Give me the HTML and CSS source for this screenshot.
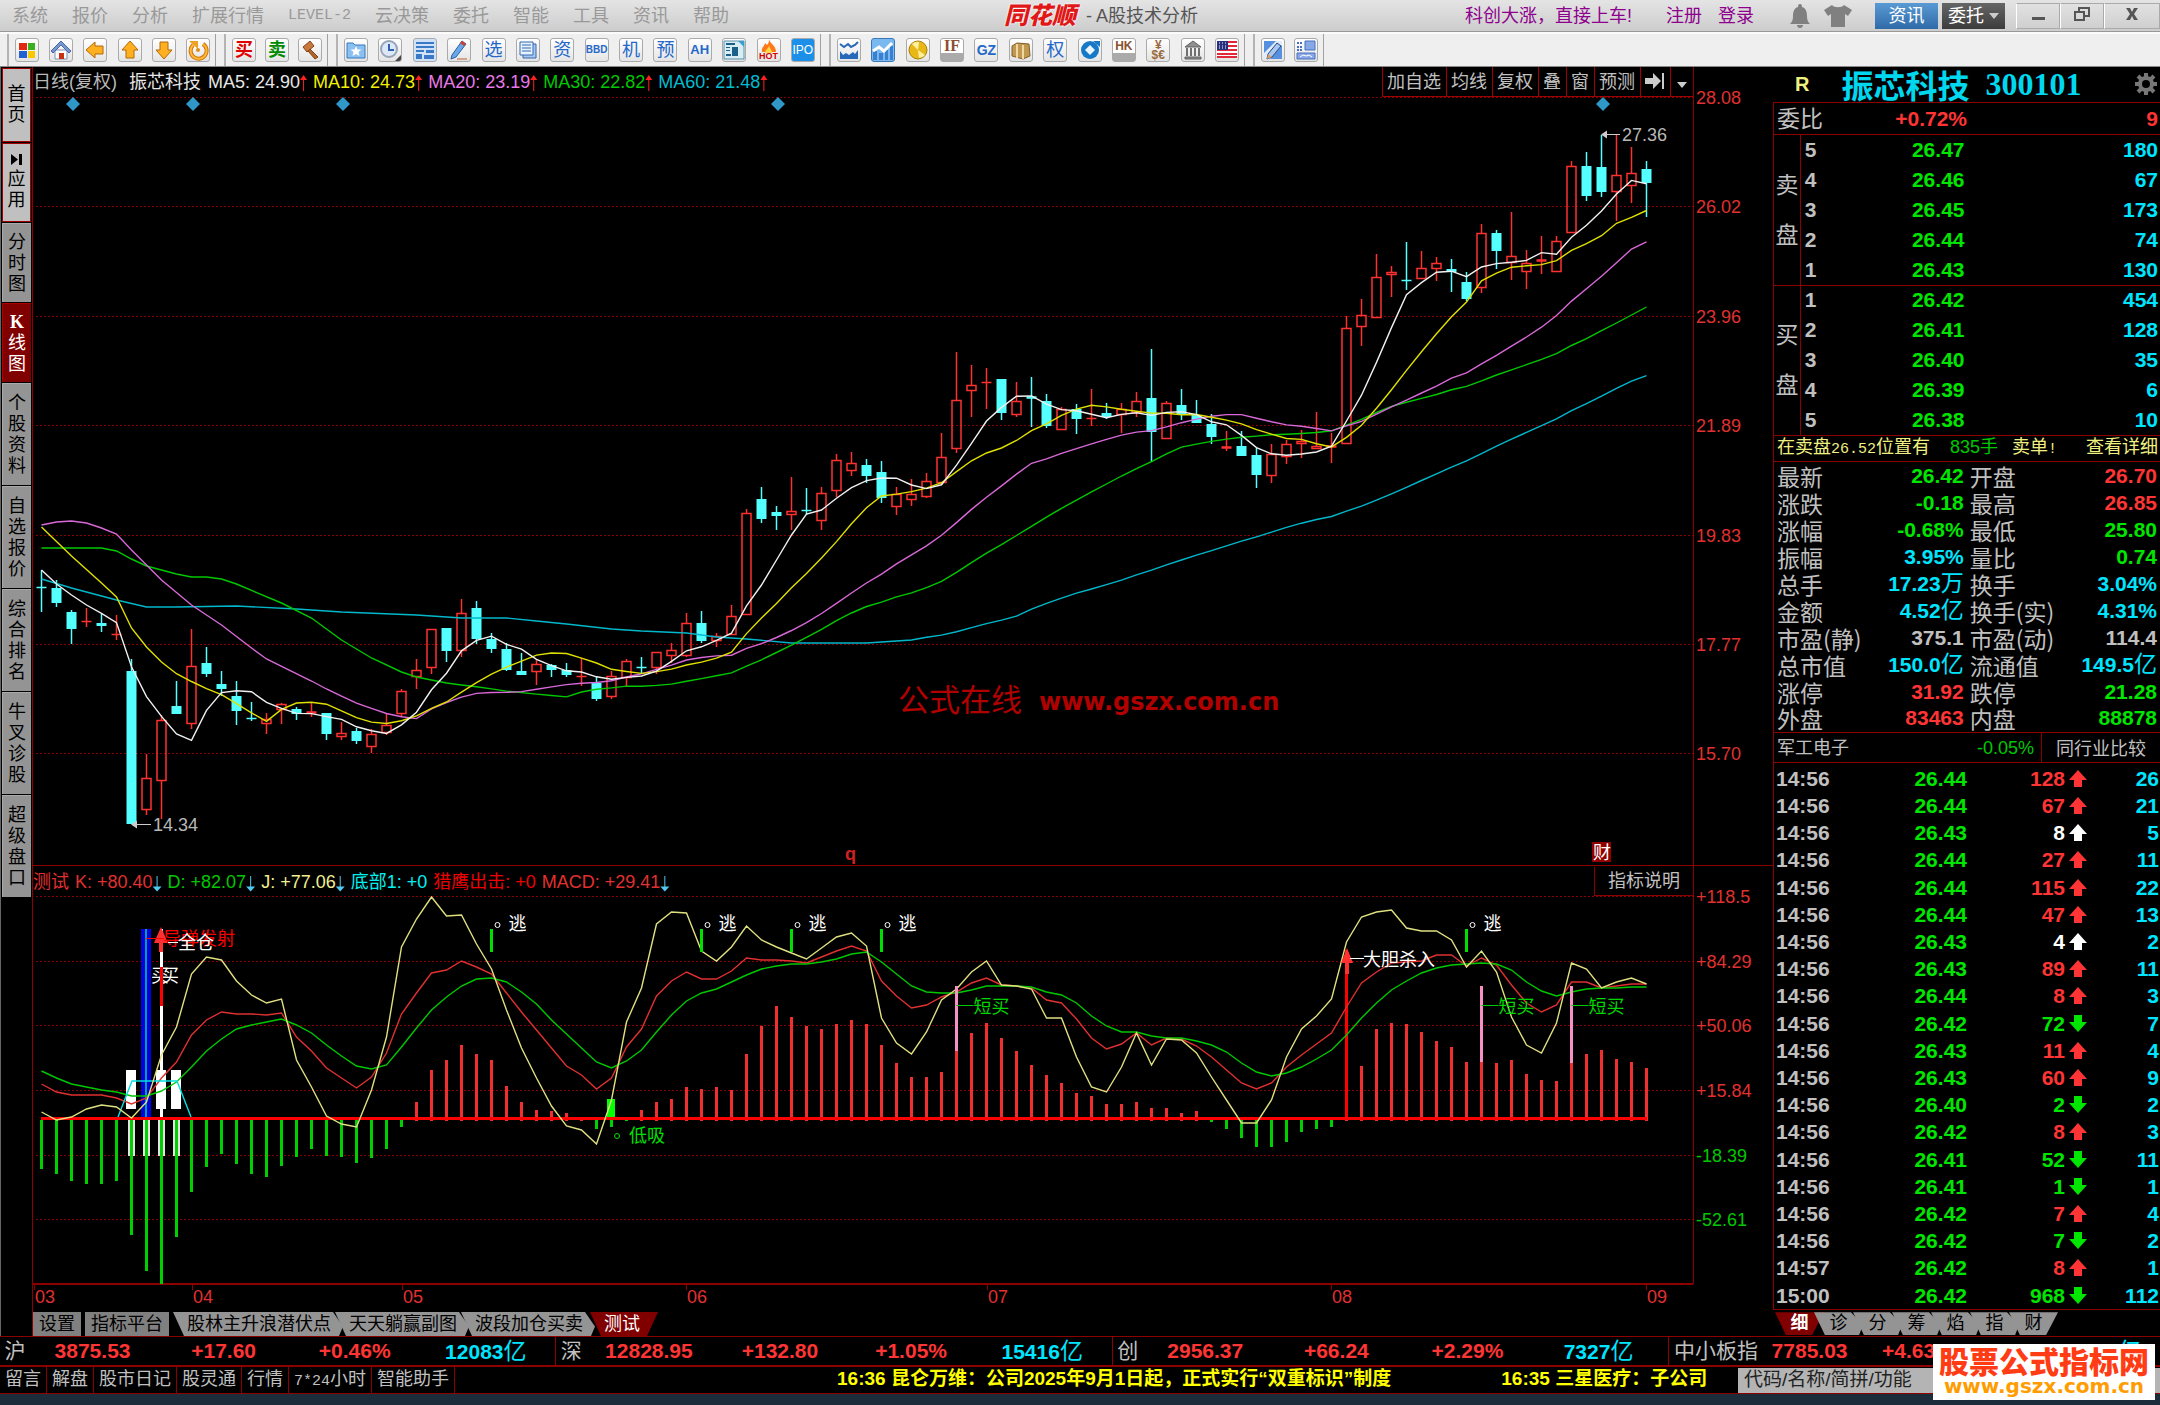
FILE: index.html
```html
<!DOCTYPE html>
<html lang="zh-CN">
<head>
  <meta charset="UTF-8">
  <meta name="viewport" content="width=device-width, initial-scale=1.0">
  <title>同花顺 - A股技术分析</title>
  <link rel="stylesheet" href="styles.css">
</head>
<body>
  <header class="titlebar">
    <nav class="menu">
      <a href="#">系统</a><a href="#">报价</a><a href="#">分析</a><a href="#">扩展行情</a><a href="#" class="mono">LEVEL-2</a><a href="#">云决策</a><a href="#">委托</a><a href="#">智能</a><a href="#">工具</a><a href="#">资讯</a><a href="#">帮助</a>
    </nav>
    <div class="brand"><strong>同花顺</strong><span>- A股技术分析</span></div>
    <div class="account">
      <a href="#" class="promo">科创大涨，直接上车!</a>
      <a href="#">注册</a>
      <a href="#">登录</a>
    </div>
    <div class="tools">
      <svg width="22" height="26" viewBox="0 0 22 26"><path d="M11 1c2 0 2 2 2 3 4 1 5 5 5 9 0 4 1 6 3 8H1c2-2 3-4 3-8 0-4 1-8 5-9 0-1 0-3 2-3zM8 22h6c0 4-6 4-6 0z" fill="#808080"/></svg>
      <svg width="30" height="24" viewBox="0 0 30 24"><path d="M9 1c2 3 10 3 12 0l8 5-4 6-3-2v13H8V10l-3 2-4-6z" fill="#808080"/></svg>
    </div>
    <div class="winbtns">
      <button class="blue">资讯</button>
      <button class="dark">委托<i class="caret"></i></button>
      <button class="win" aria-label="最小化"><svg width="16" height="16" viewBox="0 0 16 16"><path d="M2 11h13v3H2z" fill="#555"/></svg></button>
      <button class="win" aria-label="还原"><svg width="18" height="16" viewBox="0 0 18 16"><path d="M6 5V2h10v8h-4M2 6h9v8H2z" fill="none" stroke="#555" stroke-width="2"/></svg></button>
      <button class="win wide" aria-label="关闭"><svg width="16" height="16" viewBox="0 0 16 16"><path d="M2 2h4l2 4 2-4h4l-4 6 4 6h-4l-2-4-2 4H2l4-6z" fill="#555"/></svg></button>
    </div>
  </header>

  <div class="toolbar">
    <div class="group g6">
      <button aria-label="主菜单"><svg viewBox="0 0 22 22"><path d="M3 4h8v7H3z" fill="#e02a10"/><path d="M12 4h7v7h-7z" fill="#3ab020"/><path d="M3 12h8v7H3z" fill="#2060d0"/><path d="M12 12h7v7h-7z" fill="#f8c800"/></svg></button>
      <button aria-label="首页"><svg viewBox="0 0 22 22"><path d="M5 11h12v9H5z" fill="#fff" stroke="#7a90b8"/><path d="M1 12 11 2l10 10-2 2-8-8-8 8z" fill="#7a98d0" stroke="#4a68a8"/><path d="M9 14h5v6H9z" fill="#c83010"/></svg></button>
      <button aria-label="后退"><svg viewBox="0 0 22 22"><path d="M2 11 11 3v4h8v8h-8v4z" fill="#ffb020" stroke="#b06a08"/></svg></button>
      <button aria-label="向上"><svg viewBox="0 0 22 22"><path d="M11 2l8 9h-4v8H7v-8H3z" fill="#ffb020" stroke="#b06a08"/></svg></button>
      <button aria-label="向下"><svg viewBox="0 0 22 22"><path d="M11 20l-8-9h4V3h8v8h4z" fill="#ffb020" stroke="#b06a08"/></svg></button>
      <button aria-label="刷新"><svg viewBox="0 0 22 22"><path d="M16 5a8 8 0 1 1-10 1" fill="none" stroke="#d07808" stroke-width="4"/><path d="M16 5a8 8 0 1 1-10 1" fill="none" stroke="#ffb838" stroke-width="2"/><path d="M2 2h9v8z" fill="#f0a020"/><circle cx="11" cy="11" r="2" fill="#e09018"/></svg></button>
    </div>
    <div class="group g3">
      <button class="buy">买</button>
      <button class="sell">卖</button>
      <button aria-label="锤子"><svg viewBox="0 0 22 22"><path d="M4 8l7-6 4 5-7 6z" fill="#c87838" stroke="#80421a"/><path d="M11 10l8 8-3 2-7-8z" fill="#b06428" stroke="#80421a"/></svg></button>
    </div>
    <div class="group g14">
      <button aria-label="自选"><svg viewBox="0 0 22 22"><path d="M2 4h6l2 2h10v13H2z" fill="#8cc0f0" stroke="#3478c0"/><path d="M11 7l1.500 3.500h4l-3 2.500 1 4-3.500-2-3.500 2 1-4-3-2.500h4z" fill="#fff"/></svg></button>
      <button aria-label="时间"><svg viewBox="0 0 22 22"><circle cx="10" cy="10" r="8" fill="#dce8f8" stroke="#98a4b8" stroke-width="2"/><path d="M10 5v6h5" fill="none" stroke="#3060b0" stroke-width="2"/><path d="M22 16v6h-6z" fill="#444"/></svg></button>
      <button aria-label="列表" class="lit"><svg viewBox="0 0 22 22"><path d="M2 3h18v2H2zM2 7h18v2H2zM2 11h8v2H2zM2 15h6v5H2zM12 11h8v3h-8zM10 16h10v4H10z" fill="#3a78c8"/></svg></button>
      <button aria-label="画线"><svg viewBox="0 0 22 22"><path d="M4 16 14 2l4 3L8 18l-5 2z" fill="#6aa8e8" stroke="#2860a8"/><path d="M14 2l4 3-2 2-4-3z" fill="#d04030"/><path d="M9 20h10" stroke="#c06030"/></svg></button>
      <button class="txt">选</button>
      <button aria-label="报表"><svg viewBox="0 0 22 22"><path d="M6 5h13v14H6z" fill="#a8c8f0" stroke="#3468b0"/><path d="M3 3h13v13H3z" fill="#e8f2fc" stroke="#3468b0"/><path d="M5 6h9M5 9h9M5 12h9" stroke="#3468b0"/></svg></button>
      <button class="txt">资</button>
      <button class="txt sm">BBD</button>
      <button class="txt">机</button>
      <button class="txt">预</button>
      <button class="txt ah">AH</button>
      <button aria-label="新闻"><svg viewBox="0 0 22 22"><path d="M1 2h20v18H1z" fill="#d8ecf4" stroke="#5890a8"/><path d="M3 4h9v2H3zM3 8h4v1H3zM3 11h4v1H3zM9 8h6v9H9zM3 15h5v2H3z" fill="#1a6088"/><path d="M15 2h6v6z" fill="#38a0d0"/></svg></button>
      <button class="hot" aria-label="HOT"><svg viewBox="0 0 22 22"><path d="M11 0c1 5 7 6 7 13H4c-1-5 3-6 3-9l2 2c2-2 2-4 2-6z" fill="#ff7818"/><path d="M11 6c0 3 3 4 3 8H7c0-4 4-4 4-8z" fill="#ffd848"/></svg><b>HOT</b></button>
      <button class="ipo">IPO</button>
    </div>
    <div class="group g12">
      <button aria-label="走势"><svg viewBox="0 0 22 22"><path d="M2 5l4 3 4-3 3 3 4-2 3-3" fill="none" stroke="#2868b8" stroke-width="2"/><path d="M2 12l3 4 3-2 3 2 4-3 2 2 3-4v9H2z" fill="#2868b8"/></svg></button>
      <button aria-label="指数" class="sky"><svg viewBox="0 0 22 22"><path d="M1 12h4v9H1zM7 14h4v7H7zM13 11h3v10h-3zM18 7h3v14h-3z" fill="#3a80d0"/><path d="M1 12l6-4 5 4 8-8" fill="none" stroke="#fff" stroke-width="3"/></svg></button>
      <button aria-label="黄金"><svg viewBox="0 0 22 22"><circle cx="11" cy="11" r="9" fill="#e8b818" stroke="#a88008"/><path d="M11 11 5 5a8 8 0 0 1 7-2zM11 11l7 5a8 8 0 0 1-6 3z" fill="#fff0a0"/></svg></button>
      <button class="futures">IF</button>
      <button class="txt gz">GZ</button>
      <button aria-label="商品"><svg viewBox="0 0 22 22"><path d="M2 7l5-3 12 1 1 12-7 3-11-3z" fill="#c09850" stroke="#806028"/><path d="M7 5v14M13 6v14" stroke="#f0d8a0" stroke-width="2"/></svg></button>
      <button class="txt">权</button>
      <button aria-label="基金"><svg viewBox="0 0 22 22"><circle cx="11" cy="11" r="9" fill="#1878c8"/><path d="M14 2h7v6z" fill="#1878c8"/><path d="M11 6l5 5-5 5-5-5z" fill="#e8f4ff"/></svg></button>
      <button class="futures hk">HK</button>
      <button class="fx"><span>¥</span><span>$€</span></button>
      <button aria-label="银行"><svg viewBox="0 0 22 22"><path d="M11 2l8 6H3zM3 18h16v2H3z" fill="#909090" stroke="#606060"/><path d="M5 9v8M9 9v8M13 9v8M17 9v8" stroke="#707070" stroke-width="2"/></svg></button>
      <button aria-label="美股"><svg viewBox="0 0 22 22"><path d="M1 2h20v17H1z" fill="#fff"/><path d="M1 3h20M1 7h20M1 11h20M1 15h20M1 18h20" stroke="#e02838" stroke-width="2"/><path d="M1 2h11v9H1z" fill="#283080"/><path d="M3 4h7M3 7h7M3 9h7" stroke="#fff" stroke-dasharray="1 2"/></svg></button>
    </div>
    <div class="group g2">
      <button aria-label="编辑"><svg viewBox="0 0 22 22"><path d="M2 2h18v18H2z" fill="#5890e0"/><path d="M2 14 14 2h6v4L8 20H2z" fill="#e0ecfc"/><path d="M6 15 15 4l4 3-9 11-5 2z" fill="#a8c8f0" stroke="#284880"/><path d="M6 15l4 3-5 2z" fill="#e0a060"/></svg></button>
      <button aria-label="布局"><svg viewBox="0 0 22 22"><path d="M2 4h6M2 8h6M2 11h6" stroke="#4870c0" stroke-width="2" stroke-dasharray="2 1"/><path d="M10 2h10v9H10zM2 14h18v6H2z" fill="#88a8e8" stroke="#4870c0"/><path d="M5 18l3-2 3 1 3-1 3 2" stroke="#fff" fill="none"/></svg></button>
    </div>
  </div>

  <main>
    <nav class="side">
      <button class="light h1">首页</button>
      <button class="light h2"><svg width="12" height="11" viewBox="0 0 12 11"><path d="M0 0l7 5.500L0 11zM8 0h3v11H8z" fill="#000"/></svg>应用</button>
      <button class="h2">分时图</button>
      <button class="on h2"><b>K</b>线图</button>
      <button class="h3">个股资料</button>
      <button class="h3">自选报价</button>
      <button class="h3">综合排名</button>
      <button class="h3">牛叉诊股</button>
      <button class="h3">超级盘口</button>
    </nav>

    <section class="chart">
      <div class="head">
        <span class="grey">日线(复权)</span>
        <span class="white name">振芯科技</span>
        <span class="white up">MA5: 24.90</span>
        <span class="yellow up">MA10: 24.73</span>
        <span class="pink up">MA20: 23.19</span>
        <span class="green up">MA30: 22.82</span>
        <span class="teal up">MA60: 21.48</span>
        <div class="acts">
          <button>加自选</button><button>均线</button><button>复权</button><button>叠</button><button>窗</button><button>预测</button><button aria-label="前进"><svg width="20" height="18" viewBox="0 0 20 18"><path d="M0 6h8V1l8 8-8 8v-5H0zM17 1h2v16h-2z" fill="#ccc"/></svg></button><button aria-label="更多"><i class="caret"></i></button>
        </div>
      </div>
      <svg id="price" class="plot" height="768" viewBox="33 97 1740 768" preserveAspectRatio="xMinYMin"></svg>
      <div class="head sub">
        <span class="red">测试</span>
        <span class="red down">K: +80.40</span>
        <span class="green down">D: +82.07</span>
        <span class="khaki down">J: +77.06</span>
        <span class="cyan">底部1: +0</span>
        <span class="pure">猎鹰出击: +0</span>
        <span class="red down">MACD: +29.41</span>
        <button class="explain">指标说明</button>
      </div>
      <svg id="kdj" class="plot" height="414" viewBox="33 896 1740 414" preserveAspectRatio="xMinYMin"></svg>
      <div class="subtabs">
        <button class="box">设置</button><button class="box">指标平台</button><button class="tab">股林主升浪潜伏点</button><button class="tab">天天躺赢副图</button><button class="tab">波段加仓买卖</button><button class="tab on">测试</button>
      </div>
    </section>

    <aside class="quote">
      <div class="stock">
        <b class="flag">R</b>
        <h1>振芯科技 <span>300101</span></h1>
        <svg width="24" height="24" viewBox="-12 -12 24 24"><circle r="6" fill="none" stroke="#777" stroke-width="4"/><path d="M0-11V-7M0 7v4M-11 0h4M7 0h4M-8-8l3 3M5 5l3 3M-8 8l3-3M5-5l3-3" stroke="#777" stroke-width="4"/></svg>
      </div>
      <div class="ratio"><span>委比</span><b class="r">+0.72%</b><b class="r">9</b></div>
      <table class="depth">
        <tbody>
          <tr><th rowspan="5"><span>卖</span><span>盘</span></th><td>5</td><td>26.47</td><td>180</td></tr>
          <tr><td>4</td><td>26.46</td><td>67</td></tr>
          <tr><td>3</td><td>26.45</td><td>173</td></tr>
          <tr><td>2</td><td>26.44</td><td>74</td></tr>
          <tr><td>1</td><td>26.43</td><td>130</td></tr>
        </tbody>
        <tbody>
          <tr><th rowspan="5"><span>买</span><span>盘</span></th><td>1</td><td>26.42</td><td>454</td></tr>
          <tr><td>2</td><td>26.41</td><td>128</td></tr>
          <tr><td>3</td><td>26.40</td><td>35</td></tr>
          <tr><td>4</td><td>26.39</td><td>6</td></tr>
          <tr><td>5</td><td>26.38</td><td>10</td></tr>
        </tbody>
      </table>
      <div class="notice"><span>在卖盘<code>26.52</code>位置有</span><span class="g">835手</span><span>卖单<code>!</code></span><a href="#">查看详细</a></div>
      <table class="stats">
        <tr><th>最新</th><td class="g">26.42</td><th>开盘</th><td class="r">26.70</td></tr>
        <tr><th>涨跌</th><td class="g">-0.18</td><th>最高</th><td class="r">26.85</td></tr>
        <tr><th>涨幅</th><td class="g">-0.68%</td><th>最低</th><td class="g">25.80</td></tr>
        <tr><th>振幅</th><td class="c">3.95%</td><th>量比</th><td class="g">0.74</td></tr>
        <tr><th>总手</th><td class="c">17.23<i>万</i></td><th>换手</th><td class="c">3.04%</td></tr>
        <tr><th>金额</th><td class="c">4.52<i>亿</i></td><th>换手(实)</th><td class="c">4.31%</td></tr>
        <tr><th>市盈(静)</th><td>375.1</td><th>市盈(动)</th><td>114.4</td></tr>
        <tr><th>总市值</th><td class="c">150.0<i>亿</i></td><th>流通值</th><td class="c">149.5<i>亿</i></td></tr>
        <tr><th>涨停</th><td class="r">31.92</td><th>跌停</th><td class="g">21.28</td></tr>
        <tr><th>外盘</th><td class="r">83463</td><th>内盘</th><td class="g">88878</td></tr>
      </table>
      <div class="sector"><span>军工电子</span><span class="g">-0.05%</span><button>同行业比较</button></div>
      <div class="tickbox">
        <table class="ticks"><tbody id="ticks"></tbody></table>
      </div>
      <div class="qtabs">
        <button class="on">细</button><button>诊</button><button>分</button><button>筹</button><button>焰</button><button>指</button><button class="last">财</button>
      </div>
    </aside>
  </main>

  <div class="indexes">
    <div><span>沪</span><b>3875.53</b><b>+17.60</b><b>+0.46%</b><b class="c">12083<i>亿</i></b></div>
    <div><span>深</span><b>12828.95</b><b>+132.80</b><b>+1.05%</b><b class="c">15416<i>亿</i></b></div>
    <div><span>创</span><b>2956.37</b><b>+66.24</b><b>+2.29%</b><b class="c">7327<i>亿</i></b></div>
    <div class="wide"><span>中小板指</span><b>7785.03</b><b>+4.63</b><b>+0.06%</b><b class="c">1617<i>亿</i></b></div>
  </div>

  <footer>
    <nav>
      <a href="#">留言</a><a href="#">解盘</a><a href="#">股市日记</a><a href="#">股灵通</a><a href="#">行情</a><a href="#"><code>7*24</code>小时</a><a href="#">智能助手</a>
    </nav>
    <div class="news">
      <a href="#">16:36 昆仑万维：公司2025年9月1日起，正式实行“双重标识”制度</a>
      <a href="#">16:35 三星医疗：子公司</a>
    </div>
    <input type="text" aria-label="搜索" placeholder="代码/名称/简拼/功能">
  </footer>
  <div class="stamp"><b>股票公式指标网</b><span>www.gszx.com.cn</span></div>
  <script src="chart.js"></script>
</body>
</html>
```
FILE: styles.css
```css
:root {
  --line: #8c0000;
  --red: #ff3434;
  --green: #00e600;
  --cyan: #00e5ff;
  --grey: #c0c0c0;
  --cjk: "Liberation Sans", "Noto Sans CJK SC", sans-serif;
}

* {
  box-sizing: border-box;
  margin: 0;
  padding: 0;
}

body {
  background: #1c2c3a;
  color: var(--grey);
  font: 18px/24px var(--cjk);
  min-height: 100vh;
  overflow: hidden;
}

button {
  font: inherit;
  color: inherit;
  background: none;
  border: 0;
  cursor: pointer;
}

a {
  color: inherit;
  text-decoration: none;
}

i {
  font-style: normal;
}

code {
  font: 15px "Liberation Mono", monospace;
}

.caret {
  display: inline-block;
  border: 5px solid transparent;
  border-top: 6px solid #ccc;
  border-bottom: 0;
}

/* title bar */
.titlebar {
  display: flex;
  align-items: center;
  height: 32px;
  padding-left: 12px;
  background: linear-gradient(#e4e4e4, #cdcdcd);
  border-bottom: 1px solid #999;
  position: relative;
}

.menu {
  display: flex;
  gap: 24px;
  color: #999;
}

.menu .mono {
  font-family: "Liberation Mono", monospace;
  font-size: 15px;
}

.brand {
  position: absolute;
  left: 1004px;
  display: flex;
  gap: 10px;
  color: #555;
}

.brand strong {
  color: #e01818;
  font-size: 24px;
  font-weight: 900;
  font-style: italic;
  text-shadow: 0 0 2px #fff, 0 0 2px #fff;
}

.account {
  display: flex;
  gap: 16px;
  margin-left: auto;
  color: #8c008c;
}

.account .promo {
  margin-right: 18px;
}

.tools {
  display: flex;
  align-items: center;
  gap: 12px;
  width: 64px;
  margin: 0 22px 0 35px;
}

.winbtns {
  display: flex;
  height: 26px;
  color: #fff;
}

.winbtns button {
  width: 63px;
  margin-right: 4px;
}

.winbtns .blue {
  background: linear-gradient(#5a9ad4, #2f6aa8);
}

.winbtns .dark {
  background: linear-gradient(#666, #3c3c3c);
  display: flex;
  align-items: center;
  justify-content: center;
  gap: 5px;
  margin-right: 11px;
}

.winbtns .win {
  width: 44px;
  margin: 0;
  border: 1px solid #aaa;
  border-left-color: #fff;
}

.winbtns .wide {
  width: 56px;
}

/* toolbar */
.toolbar {
  display: flex;
  align-items: center;
  gap: 8px;
  height: 35px;
  padding-left: 7px;
  background: #efefef;
  border-top: 2px solid #fbfbfb;
  border-bottom: 1px solid #888;
}

.group {
  display: flex;
  justify-content: space-between;
  height: 32px;
  align-items: center;
  padding: 0 5px 0 6px;
  border-left: 2px solid #b4b4b4;
  border-right: 1px solid #a0a0a0;
}

.g6 { width: 209px; }
.g3 { width: 104px; }
.g14 { width: 485px; }
.g12 { width: 416px; }
.g2 { width: 71px; }

.toolbar button {
  position: relative;
  width: 24px;
  height: 24px;
  border: 1px solid #aaa;
  border-radius: 3px;
  background: linear-gradient(#fff, #e4e4e4);
  line-height: 22px;
  text-align: center;
  overflow: hidden;
}

.toolbar svg {
  display: block;
  width: 22px;
  height: 22px;
}

.toolbar .buy { color: #e00000; font-weight: bold; }
.toolbar .sell { color: #008a00; font-weight: bold; }
.toolbar .txt { color: #2468c8; }

.toolbar .sm {
  font: bold 10px/22px "Liberation Sans", sans-serif;
}

.toolbar .ah {
  font: bold 13px/22px "Liberation Sans", sans-serif;
}

.toolbar .gz {
  font: bold 14px/22px "Liberation Sans", sans-serif;
}

.toolbar .lit { background: #cfe2f8; }
.toolbar .sky { background: #7ab8f0; border-color: #3a78b8; }

.toolbar .hot b {
  position: absolute;
  left: 0;
  bottom: 0;
  width: 22px;
  font: bold 9px/9px "Liberation Sans", sans-serif;
  color: #d00000;
}

.toolbar .ipo {
  background: #1c90e8;
  color: #fff;
  font: 12px/22px "Liberation Sans", sans-serif;
}

.toolbar .futures {
  color: #8a5030;
  font: bold 16px/14px "Liberation Serif", serif;
  padding-bottom: 8px;
  background: linear-gradient(#fff 65%, #aaa 65%);
}

.toolbar .hk {
  font: bold 12px/14px "Liberation Sans", sans-serif;
}

.toolbar .fx {
  color: #9a6a40;
  font: bold 12px/10px "Liberation Sans", sans-serif;
}

.fx span {
  display: block;
}

/* main area */
main {
  display: flex;
  height: 1269px;
  background: #000;
}

.side {
  width: 32px;
  padding: 1px 1px 0 1px;
  display: flex;
  flex-direction: column;
  gap: 1px;
  border-left: 1px solid #666;
}

.side button {
  width: 29px;
  padding: 0 5px;
  background: #949494;
  border: 1px solid #aaa;
  border-width: 1px 0 0 1px;
  color: #000;
  line-height: 21px;
  word-break: break-all;
}

.side svg {
  display: block;
  margin: 0 auto 4px;
}

.side b {
  display: block;
  font-family: "Liberation Serif", serif;
}

.side .h1 { height: 74px; }
.side .h2 { height: 79px; }
.side .h3 { height: 102px; }

.side .light {
  background: #c0c0c0;
  border: 1px solid #a00000;
  padding: 0 4px;
}

.side .on {
  background: #800000;
  border-color: #b00000;
  color: #fff;
}

.chart {
  flex: 1;
  min-width: 0;
  border-left: 1px solid var(--line);
}

.head {
  display: flex;
  align-items: center;
  gap: 6px;
  height: 30px;
  margin-right: 79px;
  border-right: 1px solid var(--line);
  white-space: nowrap;
}

.head .name {
  margin: 0 1px 0 6px;
}

.up::after,
.down::after {
  content: "";
  display: inline-block;
  width: 7px;
  height: 16px;
  vertical-align: -3px;
  background: #ff2020;
  clip-path: polygon(50% 0, 100% 5px, 4px 5px, 4px 100%, 3px 100%, 3px 5px, 0 5px);
}

.down::after {
  width: 9px;
  background: #50c8f0;
  vertical-align: -4px;
  clip-path: polygon(4px 0, 5px 0, 5px 11px, 100% 11px, 50% 100%, 0 11px, 4px 11px);
}

.white { color: #e6e6e6; }
.grey { color: #b8b8b8; }
.yellow { color: #f0f000; }
.pink { color: #e878e8; }
.green { color: #00c800; }
.teal { color: #00bcd0; }
.cyan { color: #00f0f0; }
.khaki { color: #f0f090; }
.red { color: #e03030; }
.pure { color: #f00000; }

.acts {
  display: flex;
  align-self: stretch;
  margin-left: auto;
  border-bottom: 1px solid #a00000;
}

.acts button {
  padding: 0 5px 0 4px;
  border-left: 1px solid #a00000;
}

.acts button:last-child {
  padding: 0 6px;
}

.acts svg {
  vertical-align: -2px;
}

.head.sub {
  height: 31px;
  padding-top: 1px;
  border-top: 1px solid var(--line);
}

.explain {
  align-self: stretch;
  width: 99px;
  margin-left: auto;
  border-left: 1px solid var(--line);
  border-bottom: 1px solid var(--line);
}

.plot {
  display: block;
  width: 100%;
  overflow: visible;
}

.plot text {
  font: 18px var(--cjk);
}

.plot .bold {
  font-weight: bold;
}

.plot .mark {
  font: 31px "Noto Sans CJK SC", sans-serif;
  fill: #b00000;
}

.plot .url {
  font: bold 24px "DejaVu Sans", sans-serif;
  fill: #b00000;
}

.subtabs {
  display: flex;
  height: 26px;
  padding-top: 2px;
  color: #000;
}

.subtabs button {
  height: 24px;
  line-height: 24px;
  background: #949494;
}

.subtabs .box {
  padding: 0 6px;
  margin-right: 4px;
  background: #808080;
}

.subtabs .tab {
  padding: 0 12px 0 14px;
  margin-right: -8px;
  clip-path: polygon(0 0, calc(100% - 10px) 0, 100% 60%, calc(100% - 4px) 100%, 11px 100%);
}

.subtabs .tab.on {
  background: #800000;
  color: #fff;
  padding-right: 18px;
  margin-left: 3px;
  clip-path: polygon(0 0, 100% 0, calc(100% - 11px) 100%, 11px 100%);
}

/* quote panel */
.quote {
  width: 387px;
  display: flex;
  flex-direction: column;
}

.quote > div,
.quote > table {
  border-left: 1px solid var(--line);
}

.quote table {
  width: 100%;
  border-collapse: collapse;
  border-bottom: 1px solid var(--line);
}

.quote b,
.quote td,
.indexes b {
  font: bold 21px/24px var(--cjk);
}

.quote i,
.indexes i {
  font-size: 23px;
  font-weight: normal;
}

.r { color: var(--red); }
.g, td.g { color: var(--green); }
.c { color: var(--cyan); }

.quote .stock {
  display: flex;
  align-items: center;
  height: 36px;
  padding: 0 2px 0 22px;
  border-left: 0;
  border-bottom: 1px solid var(--line);
}

.quote .flag {
  color: #f0f080;
  font-size: 20px;
}

.stock h1 {
  display: flex;
  gap: 16px;
  margin: 0 auto 0 32px;
  color: #00d8f0;
  font: bold 32px/34px "Noto Sans CJK SC", sans-serif;
}

.stock h1 span {
  font-family: "Liberation Serif", serif;
}

.ratio {
  display: grid;
  grid-template-columns: 70px 120px 1fr;
  align-items: center;
  height: 33px;
  padding: 1px 2px 0 3px;
  border-bottom: 1px solid var(--line);
  text-align: right;
}

.ratio span {
  font-size: 23px;
  text-align: left;
}

.depth th {
  width: 27px;
  border-right: 1px solid var(--line);
  border-bottom: 1px solid var(--line);
}

.depth th span {
  display: block;
  font: 23px/50px var(--cjk);
}

.depth tbody {
  border-bottom: 1px solid var(--line);
}

.depth tr {
  height: 30px;
}

.depth td {
  text-align: right;
  padding-right: 2px;
  color: var(--cyan);
}

.depth td:nth-last-child(3) {
  width: 18px;
  color: var(--grey);
}

.depth td:nth-last-child(2) {
  width: 148px;
  color: var(--green);
}

.notice {
  display: flex;
  height: 27px;
  padding: 0 2px 0 3px;
  border-bottom: 1px solid var(--line);
  color: #f0f080;
  line-height: 22px;
}

.notice span {
  margin-right: 14px;
}

.notice span:first-child {
  margin-right: 20px;
}

.notice a {
  margin-left: auto;
}

.notice .g,
.sector .g {
  color: #00c800;
}

.stats tr {
  height: 27px;
}

.stats th {
  width: 96px;
  padding-left: 3px;
  text-align: left;
  white-space: nowrap;
  font: 23px/26px "Noto Sans CJK SC", sans-serif;
}

.stats td {
  width: 97px;
  padding-right: 3px;
  text-align: right;
  white-space: nowrap;
}

.sector {
  display: flex;
  align-items: center;
  height: 31px;
  padding-left: 3px;
  border-bottom: 1px solid var(--line);
}

.sector .g {
  margin: 0 7px 0 auto;
}

.sector button {
  align-self: stretch;
  width: 119px;
  padding-top: 2px;
  border-left: 1px solid var(--line);
}

.tickbox {
  flex: 1;
  padding-top: 2px;
  border-bottom: 1px solid var(--line);
}

.quote .ticks {
  height: 544px;
  border: 0;
}

.ticks td {
  text-align: right;
  color: var(--grey);
}

.ticks td:first-child {
  width: 60px;
  padding-left: 2px;
  text-align: left;
}

.ticks td:nth-child(2) {
  width: 133px;
  color: var(--green);
}

.ticks td:nth-child(3) {
  width: 120px;
}

.ticks td:nth-child(4) {
  padding-right: 1px;
  color: var(--cyan);
}

.ticks .up3 { color: var(--red); }
.ticks .dn3 { color: var(--green); }
.ticks .big { color: #fff; }

.ticks svg {
  margin-left: 4px;
  vertical-align: -1px;
}

.quote .qtabs {
  display: flex;
  height: 26px;
  padding: 2px 0 0 2px;
  border-left: 0;
  color: #000;
}

.qtabs button {
  width: 49px;
  height: 23px;
  margin-right: -10px;
  line-height: 23px;
  background: #949494;
  clip-path: polygon(0 0, calc(100% - 12px) 0, 100% 55%, calc(100% - 4px) 100%, 11px 100%);
}

.qtabs .on,
.qtabs .last {
  clip-path: polygon(0 0, 100% 0, calc(100% - 12px) 100%, 11px 100%);
}

.qtabs .on {
  background: #800000;
  color: #fff;
  font-weight: bold;
}

/* index strip */
.indexes {
  display: grid;
  grid-template-columns: 34fr 34fr 34fr 30fr;
  height: 31px;
  background: #000;
  border-top: 1px solid var(--line);
  border-bottom: 2px solid var(--line);
  text-align: center;
  color: var(--red);
}

.indexes div {
  display: grid;
  grid-template-columns: 24px repeat(4, 1fr);
  align-items: center;
  padding: 0 4px 0 3px;
  border-right: 1px solid var(--line);
}

.indexes .wide {
  grid-template-columns: 88px repeat(4, 1fr);
  border: 0;
}

.indexes span {
  color: var(--grey);
  font-size: 21px;
}

/* status bar */
footer {
  display: flex;
  align-items: center;
  height: 27px;
  background: #000;
  border-bottom: 1px solid var(--line);
}

footer nav {
  display: flex;
  height: 26px;
}

footer nav a {
  padding: 0 5px;
  border-right: 1px solid var(--line);
}

.news {
  flex: 1;
  display: flex;
  gap: 110px;
  height: 26px;
  margin-left: 382px;
  overflow: hidden;
  white-space: nowrap;
  color: #ff0;
  font-size: 19px;
  font-weight: bold;
}

footer input {
  width: 422px;
  height: 25px;
  padding-left: 6px;
  border: 0;
  background: #b4b4b4;
  font: 19px var(--cjk);
}

footer input::placeholder {
  color: #222;
}

.stamp {
  position: absolute;
  right: 5px;
  bottom: 5px;
  width: 222px;
  height: 56px;
  background: #fff;
  text-align: center;
}

.stamp b {
  display: block;
  color: #ff3c14;
  font: 900 30px/32px "Noto Sans CJK SC", sans-serif;
}

.stamp span {
  display: block;
  color: #ff9c00;
  font: bold 20px/20px "DejaVu Sans", sans-serif;
}
```
FILE: chart.js
```js
// one bar every 15px, the first at x = 41
const STEP = 15;
const X0 = 41.5;
const ZERO = 1118;
const AXIS = 1693;
const xs = i => X0 + i * STEP;

// [rise, high, bodyTop, bodyBottom, low]
const bars = [
  [0,570,587,588,612],[0,580,588,603,607],[0,610,612,629,644],[1,608,621,622,627],[0,614,623,626,632],
  [1,615,634,635,640],[0,659,671,824,824],[1,754,778,810,815],[1,715,720,781,819],[0,681,706,714,714],
  [1,629,666,724,729],[0,647,663,674,677],[0,671,684,689,696],[0,681,696,711,725],[0,702,718,719,721],
  [1,713,719,724,734],[1,703,704,710,724],[0,707,709,714,720],[1,703,712,714,717],[0,713,713,734,740],
  [1,722,733,737,740],[0,728,731,741,744],[1,729,734,747,753],[1,714,725,733,735],[1,689,691,714,717],
  [1,659,670,677,689],[1,629,629,668,674],[0,628,628,651,662],[1,599,613,651,657],[0,601,608,639,644],
  [0,633,639,649,653],[0,643,649,670,671],[0,653,671,675,675],[1,659,664,672,685],[0,664,665,670,677],
  [0,663,670,675,677],[1,658,676,677,686],[0,676,683,699,701],[1,671,676,697,699],[1,659,661,678,687],
  [0,657,667,668,674],[1,652,652,668,674],[1,643,650,656,663],[1,613,623,656,657],[0,611,623,641,643],
  [1,633,636,641,647],[1,605,616,635,635],[1,509,513,615,615],[0,487,499,519,523],[0,506,512,516,530],
  [1,477,511,515,530],[0,488,510,511,515],[1,487,493,521,530],[1,454,460,491,497],[1,452,463,471,476],
  [0,459,465,476,483],[0,461,472,498,503],[1,487,494,507,515],[1,479,494,500,506],[1,473,481,497,498],
  [1,433,457,483,485],[1,352,400,449,453],[1,365,385,391,417],[1,368,382,383,409],[0,379,379,413,420],
  [1,382,401,415,417],[0,377,397,399,427],[0,394,401,426,428],[1,407,409,430,430],[0,404,409,419,434],
  [1,389,418,419,426],[0,403,413,417,419],[1,403,409,415,433],[1,392,401,413,417],[0,349,398,432,462],
  [1,401,403,439,439],[0,389,405,414,420],[0,400,415,423,423],[0,414,424,437,444],[1,431,447,449,451],
  [0,431,446,456,456],[0,448,455,475,488],[1,444,454,476,483],[1,440,444,457,464],[1,430,441,444,458],
  [1,412,446,449,449],[1,433,446,448,463],[1,316,328,444,444],[1,299,315,327,346],[1,254,277,318,318],
  [1,266,272,275,297],[0,242,280,281,290],[1,251,268,279,279],[1,257,263,269,281],[0,259,269,272,292],
  [0,272,282,299,301],[1,224,233,288,293],[0,230,233,251,269],[1,212,256,263,280],[1,250,263,272,289],
  [1,236,260,262,274],[1,236,241,272,272],[1,161,166,233,233],[0,152,166,196,201],[0,135,167,192,197],
  [1,135,175,192,221],[1,147,173,186,203],[0,161,169,183,217]
];

// averages need a run-in: [index, y] pairs stand in for the bars before the window
const averages = [
  [60, '#00b8cc', [[0,579],[2,588],[4,596],[5,600],[7,607],[9,607],[13,606],[17,609],[20,612],[25,615],[28,618],[31,618],[33,621],[35,624],[38,629],[40,631],[43,633],[45,637],[47,639],[50,643],[55,643],[58,640]]],
  [30, '#00c800', [[0,548],[4,548],[5,551],[6,559],[7,566],[9,574],[10,577],[11,577],[12,579],[13,584],[16,603],[18,618],[20,640],[22,658],[24,672],[25,677],[27,683],[28,685]]],
  [20, '#d868d8', [[0,525],[1,522],[2,521],[3,523],[4,528],[5,534],[6,550],[8,580],[10,605],[12,625],[14,648],[15,659],[18,681]]],
  [10, '#e0e000', [[0,527],[2,556],[4,583],[5,597],[6,628],[7,647],[8,662]]],
  [5, '#f0f0f0', [[0,570],[1,584],[2,595],[3,605]]]
];

const k = [1084,1092,1095,1095,1095,1098,1104,1098,1078,1062,1035,1020,1012,1014,1014,1015,1013,1037,1051,1068,1078,1088,1077,1053,1014,993,973,970,961,967,974,993,1012,1030,1048,1066,1075,1089,1078,1047,1029,996,981,972,979,979,971,958,960,960,961,963,957,951,946,951,981,996,1008,1005,997,992,983,978,985,986,988,1000,1003,1019,1038,1049,1044,1033,1045,1038,1039,1046,1057,1070,1083,1089,1083,1067,1055,1044,1033,1007,983,972,963,962,961,955,955,966,958,965,985,1003,1012,1005,982,982,988,986,984,984];
const d = [1071,1078,1084,1087,1090,1092,1096,1096,1091,1082,1067,1051,1039,1029,1025,1022,1019,1025,1033,1045,1056,1066,1069,1065,1047,1028,1010,997,986,979,978,982,992,1004,1020,1034,1048,1062,1068,1061,1050,1032,1015,1001,993,989,982,975,969,966,964,964,962,959,954,952,962,974,986,992,993,993,990,986,986,986,987,992,995,1003,1016,1026,1032,1032,1036,1038,1038,1041,1045,1052,1063,1072,1076,1073,1067,1059,1050,1035,1018,1003,990,981,973,968,965,964,963,964,970,982,991,996,992,989,988,988,987,987];
const j = [1112,1120,1117,1109,1105,1107,1118,1102,1055,1027,974,957,960,981,995,1003,999,1060,1087,1116,1124,1127,1090,1037,947,919,897,916,915,944,969,1010,1048,1078,1106,1126,1130,1144,1100,1022,988,924,912,913,951,961,947,926,940,947,953,959,948,937,933,946,1018,1043,1054,1032,1000,989,972,961,985,986,989,1018,1018,1057,1087,1092,1067,1033,1065,1039,1040,1053,1077,1100,1123,1123,1100,1057,1029,1016,999,942,917,912,910,928,931,931,940,967,951,972,1017,1045,1053,1023,963,969,988,982,978,984];
// free end of every MACD bar
const macd = [1169,1174,1181,1184,1184,1181,1235,1271,1284,1237,1192,1167,1154,1164,1174,1177,1166,1157,1149,1156,1157,1163,1158,1149,1127,1102,1070,1060,1045,1054,1060,1086,1102,1110,1111,1113,1117,1129,1127,1121,1110,1102,1099,1087,1089,1087,1090,1054,1026,1006,1017,1026,1029,1024,1020,1024,1045,1063,1077,1077,1072,1051,1033,1023,1038,1051,1065,1075,1083,1093,1096,1104,1104,1102,1108,1108,1113,1111,1122,1129,1138,1147,1147,1142,1132,1129,1127,1097,1066,1029,1023,1024,1032,1041,1047,1062,1062,1063,1060,1074,1080,1081,1063,1054,1050,1059,1062,1068];

const line = (x1, y1, x2, y2, color, w = 1, extra = '') =>
  `<line x1="${x1}" y1="${y1}" x2="${x2}" y2="${y2}" stroke="${color}" stroke-width="${w}" ${extra}/>`;
const rect = (x, y, w, h, fill, extra = '') =>
  `<rect x="${x}" y="${y}" width="${w}" height="${h}" fill="${fill}" ${extra}/>`;
const text = (x, y, s, fill, cls = '') => `<text x="${x}" y="${y}" fill="${fill}" class="${cls}">${s}</text>`;
const poly = (pts, color, w = 1.4) =>
  `<polyline points="${pts.map(p => p.join()).join(' ')}" fill="none" stroke="${color}" stroke-width="${w}"/>`;
const grid = y => line(36, y + 0.5, AXIS, y + 0.5, '#880000', 1, 'stroke-dasharray="2 2"');

function drawPrice() {
  let out = '';
  [['28.08', 97], ['26.02', 206], ['23.96', 316], ['21.89', 425], ['19.83', 535], ['17.77', 644], ['15.70', 753]].forEach(([label, y]) => {
    out += grid(y) + text(1696, y + 7, label, '#e03030');
  });
  out += line(AXIS + 0.5, 97, AXIS + 0.5, 865, '#8c0000') + line(AXIS, 865.5, 1773, 865.5, '#8c0000');

  bars.forEach(([rise, high, top, bottom, low], i) => {
    const x = xs(i);
    const color = rise ? '#ff3030' : '#54ffff';
    if (bottom - top < 3) {
      out += line(x, high, x, low, color, 1.5) + line(x - 5, top + 0.5, x + 5, top + 0.5, color, bottom - top + 0.5);
    } else if (rise) {
      out += line(x, high, x, top, color, 1.5) + line(x, bottom, x, low, color, 1.5);
      out += rect(x - 4.5, top + 0.5, 9, bottom - top - 1, 'none', `stroke="${color}" stroke-width="1.5"`);
    } else {
      out += line(x, high, x, low, color, 1.5) + rect(x - 5, top, 10, bottom - top, color);
    }
  });

  const close = bars.map(b => b[0] ? b[2] : b[3]);
  averages.forEach(([n, color, lead]) => {
    const pts = lead.map(([i, y]) => [xs(i), y]);
    for (let i = n - 1; i < close.length; i++) {
      const sum = close.slice(i - n + 1, i + 1).reduce((a, b) => a + b, 0);
      pts.push([xs(i), (sum / n).toFixed(1)]);
    }
    out += poly(pts, color);
  });

  [73, 193, 343, 778, 1603].forEach(x => {
    out += `<path d="M${x} 97l7 7-7 7-7-7z" fill="#3098c8"/>`;
  });
  out += line(1604, 134.5, 1620, 134.5, '#ccc') + '<path d="M1601 134.500l6-4v8z" fill="#ccc"/>' + text(1622, 141, '27.36', '#b8b8b8');
  out += line(135, 824.5, 151, 824.5, '#ccc') + '<path d="M131 824.500l6-4v8z" fill="#ccc"/>' + text(153, 831, '14.34', '#b8b8b8');
  out += text(898, 711, '公式在线', '', 'mark') + text(1039, 710, 'www.gszx.com.cn', '', 'url');
  out += text(845, 860, 'q', '#d02020', 'bold');
  out += rect(1592, 842, 19, 20, '#900000') + text(1593, 859, '财', '#fff');
  document.getElementById('price').innerHTML = out;
}

function drawKdj() {
  let out = '';
  [['+118.5', 896], ['+84.29', 961], ['+50.06', 1025], ['+15.84', 1090], ['-18.39', 1155], ['-52.61', 1219]].forEach(([label, y]) => {
    out += grid(y) + text(1696, y + 7, label, label[0] === '+' ? '#e03030' : '#00c800');
  });
  out += line(AXIS + 0.5, 896, AXIS + 0.5, 1284, '#8c0000') + line(33, 1284, AXIS, 1284, '#8c0000', 2);
  [['03', 34], ['04', 192], ['05', 402], ['06', 686], ['07', 987], ['08', 1331], ['09', 1646]].forEach(([label, x]) => {
    out += line(x + 0.5, 1284, x + 0.5, 1290, '#8c0000') + text(x + 1, 1303, label, '#e03030');
  });

  // bottom signal blocks
  [6, 8, 9].forEach(i => { out += rect(xs(i) - 5.5, 1070, 10, 39, '#fff'); });
  [6, 7, 8, 9].forEach(i => { out += rect(xs(i) - 3.5, 1120, 7, 36, '#e4e4e4'); });
  out += rect(141, 929, 10, 189, '#0000e0') + rect(145, 929, 2, 189, '#00a0a0');
  out += rect(160, 929, 3, 189, '#fff') + rect(160, 967, 3, 39, '#f00');
  out += rect(607, 1099, 8, 18, '#00ff00');

  macd.forEach((y, i) => {
    const x = xs(i) - 1.5;
    out += y > 1119 ? rect(x, 1120, 3, y - 1120, '#00d000') : rect(x, y, 3, 1121 - y, '#f03030');
  });
  out += rect(1345, 950, 3, 168, '#f00');

  out += poly(k.map((y, i) => [xs(i), y]), '#e03030');
  out += poly(d.map((y, i) => [xs(i), y]), '#00c800');
  out += poly([[118, 1117], [132, 1081], [177, 1081], [191, 1117]], '#00e0e0');
  out += rect(41, ZERO - 1, 1606, 3, '#f00');
  out += poly(j.map((y, i) => [xs(i), y]), '#e0e080');

  [30, 44, 50, 56, 95].forEach(i => {
    const x = xs(i);
    out += rect(x - 1.5, 929, 3, 23, '#00e000') + `<circle cx="${x + 6}" cy="925" r="2.500" fill="none" stroke="#fff"/>` + text(x + 17, 930, '逃', '#fff');
  });
  [[61, 1051], [96, 1062], [102, 1063]].forEach(([i, y]) => {
    const x = xs(i);
    out += rect(x - 1.5, 986, 3, y - 986, '#f890c8') + line(x, 1005.5, x + 17, 1005.5, '#00c800') + text(x + 17, 1013, '短买', '#00d800');
  });
  out += '<circle cx="617" cy="1136" r="2.500" fill="none" stroke="#00e000"/>' + text(629, 1142, '低吸', '#00e000');
  out += '<path d="M161 927l7 16h-5v9h-4v-9h-5zM1347 948l6 15h-4v11h-4v-11h-4z" fill="#ff3030"/>';
  out += line(146, 938.5, 164, 938.5, '#f00') + text(163, 945, '导弹发射', '#f00');
  out += line(168, 942.5, 178, 942.5, '#fff') + text(178, 949, '全仓', '#fff');
  out += text(151, 982, '买', '#fff') + text(161, 982, '买', '#fff') + rect(160, 967, 3, 39, '#f00');
  out += line(1350, 958.5, 1364, 958.5, '#fff') + text(1363, 966, '大胆杀入', '#fff');
  document.getElementById('kdj').innerHTML = out;
}

// time, price, volume (+ up, - down), trades
const ticks = [
  ['14:56','26.44',128,26],['14:56','26.44',67,21],['14:56','26.43',8,5,'big'],['14:56','26.44',27,11],['14:56','26.44',115,22],
  ['14:56','26.44',47,13],['14:56','26.43',4,2,'big'],['14:56','26.43',89,11],['14:56','26.44',8,3],['14:56','26.42',-72,7],
  ['14:56','26.43',11,4],['14:56','26.43',60,9],['14:56','26.40',-2,2],['14:56','26.42',8,3],['14:56','26.41',-52,11],
  ['14:56','26.41',-1,1],['14:56','26.42',7,4],['14:56','26.42',-7,2],['14:57','26.42',8,1],['15:00','26.42',-968,112]
];

function drawTicks() {
  document.getElementById('ticks').innerHTML = ticks.map(([time, price, vol, n, tone]) => {
    const arrow = vol > 0 ? 'M9 0l9 10h-5v7H5v-7H0z' : 'M9 17L0 7h5V0h8v7h5z';
    return `<tr><td>${time}</td><td>${price}</td><td class="${tone || (vol > 0 ? 'up3' : 'dn3')}">${Math.abs(vol)}<svg width="18" height="17"><path d="${arrow}" fill="currentColor"/></svg></td><td>${n}</td></tr>`;
  }).join('');
}

drawPrice();
drawKdj();
drawTicks();
```
